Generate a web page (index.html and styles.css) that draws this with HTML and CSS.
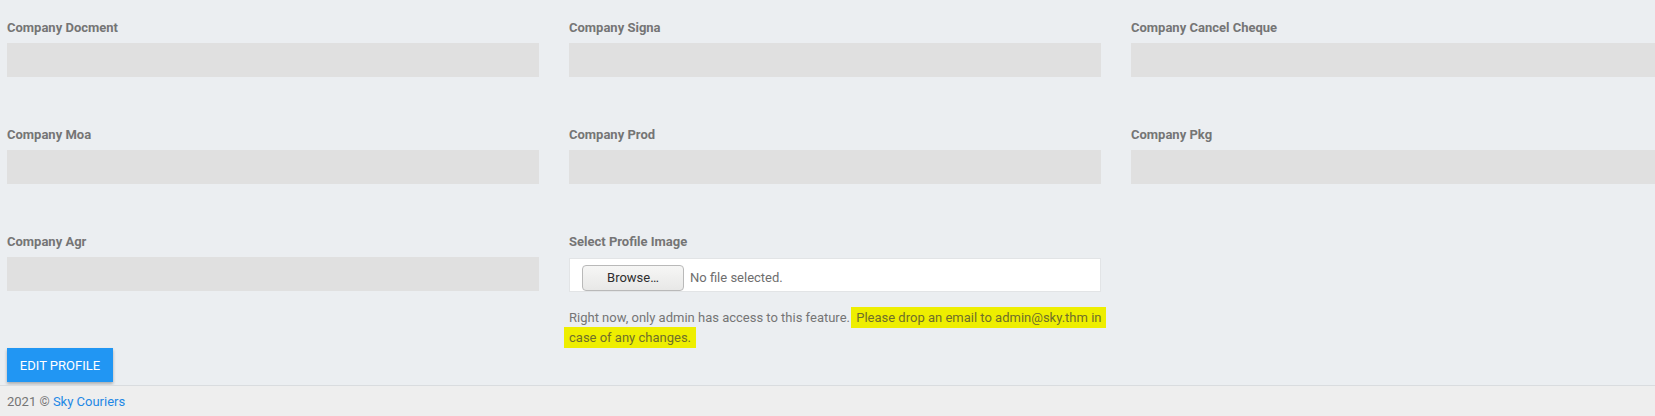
FILE: index.html
```html
<!DOCTYPE html>
<html lang="en">
<head>
<meta charset="utf-8">
<title>Profile</title>
<link rel="stylesheet" href="styles.css">
</head>
<body>
<div class="page">
  <div class="content">
    <div class="grid">
      <div class="field">
        <label class="label">Company Docment</label>
        <div class="input"></div>
      </div>
      <div class="field">
        <label class="label">Company Signa</label>
        <div class="input"></div>
      </div>
      <div class="field">
        <label class="label">Company Cancel Cheque</label>
        <div class="input"></div>
      </div>
      <div class="field">
        <label class="label">Company Moa</label>
        <div class="input"></div>
      </div>
      <div class="field">
        <label class="label">Company Prod</label>
        <div class="input"></div>
      </div>
      <div class="field">
        <label class="label">Company Pkg</label>
        <div class="input"></div>
      </div>
      <div class="field">
        <label class="label">Company Agr</label>
        <div class="input"></div>
      </div>
      <div class="field">
        <label class="label">Select Profile Image</label>
        <div class="file-box">
          <button class="browse" type="button">Browse…</button>
          <span class="file-name">No file selected.</span>
        </div>
        <p class="help">Right now, only admin has access to this feature.<span class="gap"></span> <span class="mark">Please drop an email to admin@sky.thm in case of any changes.</span></p>
      </div>
    </div>
    <button class="btn-edit" type="button">Edit Profile</button>
  </div>
  <footer class="footer">2021 © <a class="footer-link" href="#">Sky Couriers</a></footer>
</div>
</body>
</html>
```
FILE: styles.css
```css
html, body {
  margin: 0;
  padding: 0;
  overflow: hidden;
}
body {
  background: #ebeef1;
  font-family: Roboto, "Liberation Sans", Arial, sans-serif;
  font-size: 13px;
  line-height: 20px;
  color: #757575;
}
.page {
  width: 1655px;
  height: 416px;
  display: flex;
  flex-direction: column;
}
.content {
  padding: 18px 0 0 7px;
  flex: 1;
}
.grid {
  display: grid;
  grid-template-columns: repeat(3, 532px);
  column-gap: 30px;
  row-gap: 48px;
  align-items: start;
}
.field {
  display: flex;
  flex-direction: column;
}
.label {
  font-weight: 700;
  color: #757575;
  height: 20px;
  margin-bottom: 5px;
}
.input {
  height: 34px;
  background: #e0e0e0;
}
.file-box {
  height: 34px;
  box-sizing: border-box;
  background: #ffffff;
  border: 1px solid #e2e4e6;
  padding: 6px 12px 0;
  display: flex;
  align-items: flex-start;
  overflow: hidden;
  margin-top: 1px;
}
.browse {
  width: 102px;
  height: 26px;
  flex: none;
  border: 1px solid #b9b9b9;
  border-radius: 4px;
  background: linear-gradient(#f6f6f5, #e8e8e7);
  font-family: Roboto, "Liberation Sans", Arial, sans-serif;
  font-size: 13px;
  color: #2e2e2e;
  padding: 0;
  line-height: 24px;
}
.file-name {
  margin-left: 6px;
  line-height: 26px;
  color: #6e6e6e;
}
.help {
  margin: 16px -12px 0 0;
  line-height: 20px;
  color: #757575;
}
.gap {
  display: inline-block;
  width: 3px;
}
.mark {
  background: #eeee00;
  padding: 3px 5px;
  margin: 0 -5px;
  -webkit-box-decoration-break: clone;
  box-decoration-break: clone;
  color: #6f6f2a;
}
.btn-edit {
  display: block;
  width: 106px;
  height: 34px;
  padding: 0;
  border: none;
  background: #2196f3;
  color: #ffffff;
  font-family: Roboto, "Liberation Sans", Arial, sans-serif;
  font-size: 13px;
  text-transform: uppercase;
  box-shadow: 0 2px 3px rgba(0, 0, 0, 0.28);
}
.footer {
  height: 31px;
  box-sizing: border-box;
  border-top: 1px solid #d9dcdf;
  background: #eeeeee;
  padding: 6px 7px 0;
  color: #757575;
}
.footer-link {
  color: #1e88e5;
  text-decoration: none;
}
```
